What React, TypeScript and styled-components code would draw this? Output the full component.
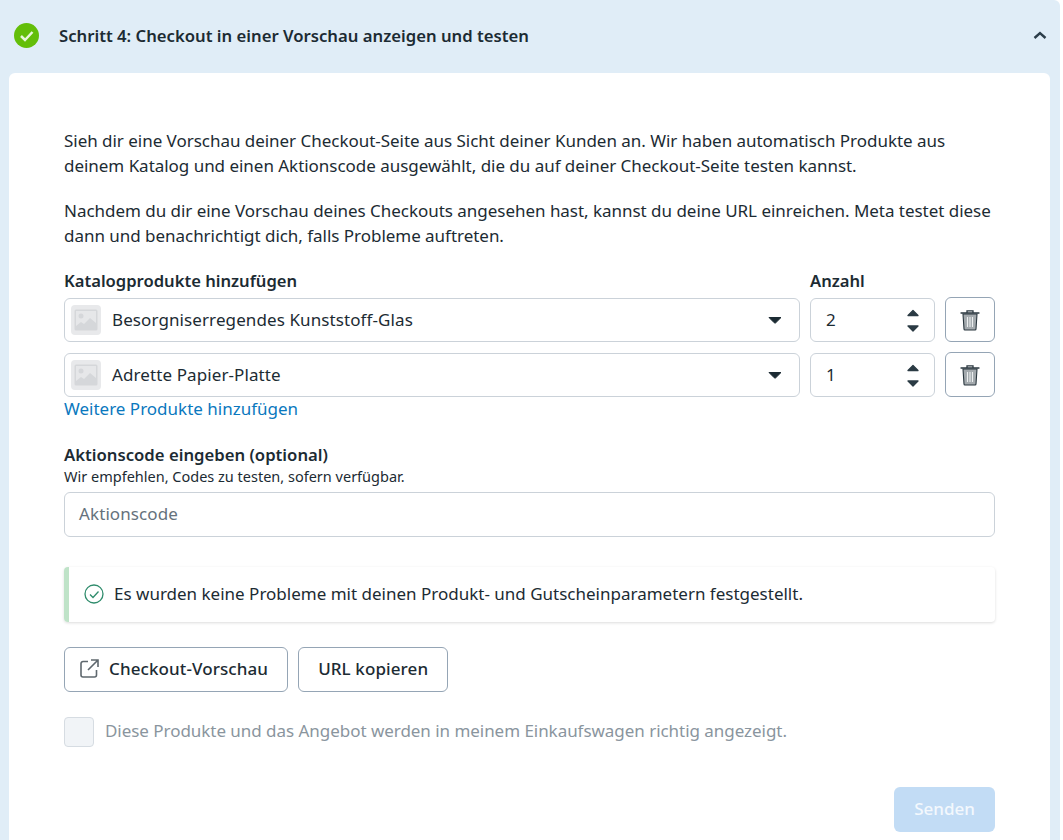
import React from "react";
import styled, { createGlobalStyle } from "styled-components";

const Global = createGlobalStyle`
  html, body { margin: 0; padding: 0; background: #fff; }
  body { font-family: "Noto Sans", "Liberation Sans", sans-serif; color: #1c2b33; }
  button { font-family: "Noto Sans", "Liberation Sans", sans-serif; }
  * { box-sizing: border-box; }
`;

const Page = styled.div`
  width: 1060px;
  height: 840px;
  overflow: hidden;
  background: #e0edf7;
  border-top-right-radius: 6px;
`;

const Header = styled.header`
  height: 73px;
  display: flex;
  align-items: center;
  padding: 0 13px 3px 14px;
`;

const Title = styled.h2`
  margin: 0 0 0 20px;
  flex: 1;
  font-size: 16.7px;
  font-weight: 600;
`;

const Card = styled.section`
  margin: 0 10px 0 9px;
  height: 767px;
  background: #fff;
  border-radius: 6px 6px 0 0;
  padding: 55px 55px 0;
`;

const Para = styled.p`
  margin: 0 0 20px;
  font-size: 17px;
  line-height: 25px;
  letter-spacing: -0.03px;
`;

const Labels = styled.div`
  display: flex;
  height: 26px;
  align-items: center;
`;

const Label = styled.div<{ $w?: number }>`
  font-size: 16.6px;
  font-weight: 600;
  line-height: 22px;
  width: ${(p) => (p.$w ? `${p.$w}px` : "auto")};
`;

const Row = styled.div`
  display: flex;
  align-items: flex-end;
  gap: 10px;
  height: 45px;
  margin-top: 3px;
  & + & { margin-top: 10px; }
`;

const Select = styled.div`
  width: 736px;
  height: 44px;
  border: 1px solid #cbd2d9;
  border-radius: 6px;
  display: flex;
  align-items: center;
  padding: 0 17px 0 6px;
  font-size: 17px;
`;

const Thumb = styled.div`
  width: 30px;
  height: 30px;
  border-radius: 4px;
  background: #e8e9eb;
  display: flex;
  align-items: center;
  justify-content: center;
  margin-right: 11px;
`;

const SelectText = styled.span`
  flex: 1;
  padding-bottom: 2px;
  letter-spacing: 0.1px;
`;

const Stepper = styled.div`
  width: 125px;
  height: 44px;
  border: 1px solid #cbd2d9;
  border-radius: 6px;
  display: flex;
  align-items: center;
  justify-content: space-between;
  padding: 0 15px;
  font-size: 17px;
`;

const Qty = styled.span`
  padding-bottom: 2px;
`;

const IconButton = styled.button`
  width: 50px;
  height: 45px;
  padding: 0;
  background: #fff;
  border: 1px solid #95a5b5;
  border-radius: 6px;
  display: flex;
  align-items: center;
  justify-content: center;
`;

const AddLink = styled.a`
  display: block;
  color: #0a78be;
  font-size: 17px;
  line-height: 24px;
  margin-top: 0;
  padding-bottom: 1px;
`;

const PromoLabel = styled(Label)`
  margin-top: 21px;
  line-height: 24px;
  font-size: 16.7px;
`;

const Hint = styled.div`
  font-size: 14.5px;
  line-height: 16px;
  margin-top: 1px;
  padding-bottom: 1px;
`;

const TextField = styled.div`
  height: 45px;
  margin-top: 7px;
  border: 1px solid #cbd2d9;
  border-radius: 6px;
  display: flex;
  align-items: center;
  padding: 0 14px 2px;
  font-size: 17px;
  letter-spacing: 0.1px;
  color: #65727c;
`;

const Notice = styled.div`
  margin-top: 30px;
  height: 55px;
  border-radius: 4px;
  border-left: 5px solid #bfe3c8;
  box-shadow: 0 1px 3px rgba(0, 0, 0, 0.14);
  display: flex;
  align-items: center;
  gap: 10px;
  padding: 0 0 2px 15px;
  font-size: 17px;
`;

const Buttons = styled.div`
  display: flex;
  gap: 10px;
  margin-top: 25px;
`;

const OutlineButton = styled.button`
  height: 45px;
  padding: 0 19px 2px 15px;
  background: #fff;
  border: 1px solid #95a5b5;
  border-radius: 6px;
  display: flex;
  align-items: center;
  gap: 10px;
  font-size: 17px;
  font-weight: 500;
  letter-spacing: 0.1px;
  color: #1c2b33;
`;

const PlainButton = styled(OutlineButton)`
  padding: 0 19px 2px;
`;

const CheckRow = styled.label`
  display: flex;
  align-items: center;
  gap: 10px;
  margin-top: 25px;
  font-size: 17px;
  letter-spacing: -0.04px;
  color: #8a959e;
`;

const CheckText = styled.span`
  padding-bottom: 3px;
  margin-left: 1px;
`;

const Box = styled.span`
  width: 30px;
  height: 30px;
  border-radius: 4px;
  background: #f1f4f7;
  border: 1px solid #d6dce2;
`;

const Footer = styled.div`
  display: flex;
  justify-content: flex-end;
  margin-top: 40px;
`;

const Send = styled.button`
  width: 101px;
  height: 45px;
  border: 0;
  border-radius: 6px;
  padding: 0 0 2px;
  background: #c2dcf5;
  color: #f3f8fd;
  font-size: 17px;
  font-weight: 500;
`;

const ImageIcon = () => (
  <svg width="24" height="22" viewBox="0 0 24 22">
    <rect x="0.500" y="0.500" width="23" height="21" rx="1.500" fill="#d5d7da" />
    <rect x="2" y="2" width="20" height="18" fill="#e6e7e9" />
    <circle cx="7" cy="7" r="2.500" fill="#d5d7da" />
    <path d="M2 20v-3l5-4 3 2 6-6 6 5v6z" fill="#d5d7da" />
  </svg>
);

const Caret = () => (
  <svg width="14" height="8" viewBox="0 0 14 8">
    <path d="M1 1.500h12L7.700 6.800a1 1 0 0 1-1.400 0z" fill="#1c2b33" stroke="#1c2b33" strokeLinejoin="round" />
  </svg>
);

const Spin = () => (
  <svg width="12" height="25" viewBox="0 0 12 25">
    <path d="M1 7.500L6 2.500l5 5z" fill="#2b3b44" stroke="#2b3b44" strokeWidth="1.300" strokeLinejoin="round" />
    <path d="M1 18l5 5 5-5z" fill="#2b3b44" stroke="#2b3b44" strokeWidth="1.300" strokeLinejoin="round" />
  </svg>
);

const Trash = () => (
  <svg width="20" height="22" viewBox="0 0 20 22">
    <path d="M7 3V1.800h6V3M1 4h18" fill="none" stroke="#2a373f" strokeWidth="1.300" strokeLinecap="round" />
    <path d="M3 5h14l-1 15a1 1 0 0 1-1 1H5a1 1 0 0 1-1-1z" fill="#a3a9ad" stroke="#2a373f" strokeWidth="1.100" />
    <path d="M7.500 8v10M10 8v10M12.500 8v10" stroke="#eceeef" strokeWidth="1.100" />
  </svg>
);

const Chevron = () => (
  <svg width="14" height="9" viewBox="0 0 14 9">
    <path d="M1.500 7L7 2l5.500 5" fill="none" stroke="#2c3e4a" strokeWidth="2.400" />
  </svg>
);

const GreenCheck = () => (
  <svg width="25" height="25" viewBox="0 0 25 25">
    <circle cx="12.500" cy="12.500" r="12.500" fill="#63be09" />
    <path d="M7 13l4 4 7.500-8" fill="none" stroke="#e8f6da" strokeWidth="2.500" />
  </svg>
);

const OutlineCheck = () => (
  <svg width="20" height="20" viewBox="0 0 20 20">
    <circle cx="10" cy="10" r="9" fill="none" stroke="#2f8c6c" strokeWidth="1.300" />
    <path d="M6 10.500l3 3 5.500-6" fill="none" stroke="#2f8c6c" strokeWidth="1.300" />
  </svg>
);

const External = () => (
  <svg width="19" height="19" viewBox="0 0 19 19">
    <path d="M8 2.500H3a2 2 0 0 0-2 2V16a2 2 0 0 0 2 2h11.500a2 2 0 0 0 2-2v-5" fill="none" stroke="#5f686e" strokeWidth="1.600" />
    <path d="M11 1h7v7M18 1L8 11" fill="none" stroke="#5f686e" strokeWidth="1.600" />
  </svg>
);

const products = [
  { name: "Besorgniserregendes Kunststoff-Glas", qty: 2 },
  { name: "Adrette Papier-Platte", qty: 1 },
];

export default function App() {
  return (
    <Page>
      <Global />
      <Header>
        <GreenCheck />
        <Title>Schritt 4: Checkout in einer Vorschau anzeigen und testen</Title>
        <Chevron />
      </Header>
      <Card>
        <Para>
          Sieh dir eine Vorschau deiner Checkout-Seite aus Sicht deiner Kunden an. Wir haben automatisch Produkte aus
          deinem Katalog und einen Aktionscode ausgewählt, die du auf deiner Checkout-Seite testen kannst.
        </Para>
        <Para>
          Nachdem du dir eine Vorschau deines Checkouts angesehen hast, kannst du deine URL einreichen. Meta testet diese
          dann und benachrichtigt dich, falls Probleme auftreten.
        </Para>
        <Labels>
          <Label $w={746}>Katalogprodukte hinzufügen</Label>
          <Label>Anzahl</Label>
        </Labels>
        {products.map((p) => (
          <Row key={p.name}>
            <Select>
              <Thumb>
                <ImageIcon />
              </Thumb>
              <SelectText>{p.name}</SelectText>
              <Caret />
            </Select>
            <Stepper>
              <Qty>{p.qty}</Qty>
              <Spin />
            </Stepper>
            <IconButton aria-label="Löschen">
              <Trash />
            </IconButton>
          </Row>
        ))}
        <AddLink>Weitere Produkte hinzufügen</AddLink>
        <PromoLabel>Aktionscode eingeben (optional)</PromoLabel>
        <Hint>Wir empfehlen, Codes zu testen, sofern verfügbar.</Hint>
        <TextField>Aktionscode</TextField>
        <Notice>
          <OutlineCheck />
          Es wurden keine Probleme mit deinen Produkt- und Gutscheinparametern festgestellt.
        </Notice>
        <Buttons>
          <OutlineButton>
            <External />
            Checkout-Vorschau
          </OutlineButton>
          <PlainButton>URL kopieren</PlainButton>
        </Buttons>
        <CheckRow>
          <Box />
          <CheckText>Diese Produkte und das Angebot werden in meinem Einkaufswagen richtig angezeigt.</CheckText>
        </CheckRow>
        <Footer>
          <Send>Senden</Send>
        </Footer>
      </Card>
    </Page>
  );
}
